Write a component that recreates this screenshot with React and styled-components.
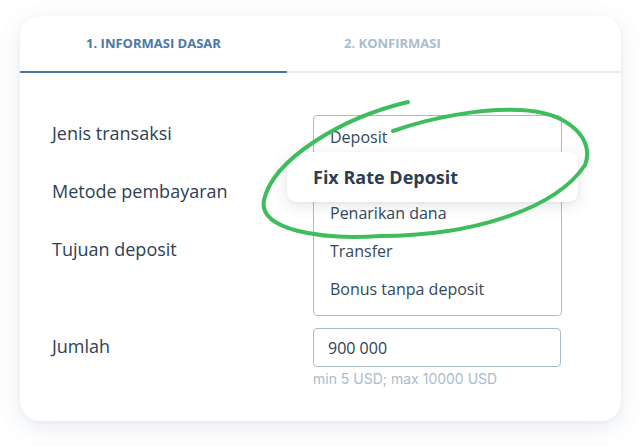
import React from "react";
import styled, { createGlobalStyle } from "styled-components";

const Global = createGlobalStyle`
  html, body { margin: 0; padding: 0; background: #ffffff; }
  body { font-family: "Open Sans", "Noto Sans", sans-serif; }
  * { box-sizing: border-box; }
`;

const Page = styled.div`
  width: 641px;
  height: 446px;
  padding: 16px 20px 0 20px;
`;

const Card = styled.div`
  position: relative;
  width: 601px;
  height: 405px;
  background: #fff;
  border-radius: 20px;
  box-shadow: 0 6px 24px rgba(60, 90, 130, 0.12), 0 1px 4px rgba(60, 90, 130, 0.05);
  overflow: hidden;
`;

const Tabs = styled.div`
  display: flex;
  height: 57px;
  border-bottom: 2px solid #e8ebef;
`;

const Tab = styled.div`
  width: ${(p) => p.$width};
  display: flex;
  align-items: center;
  justify-content: ${(p) => (p.$center ? "center" : "flex-start")};
  padding-left: ${(p) => p.$pad || "0"};
  padding-bottom: 2px;
  font-size: 13px;
  font-weight: 700;
  color: ${(p) => (p.$active ? "#4a78a8" : "#a9bccf")};
  margin-bottom: -2px;
  border-bottom: 2px solid ${(p) => (p.$active ? "#4a78a8" : "transparent")};
`;

const Body = styled.div`
  padding: 42px 0 0 32px;
  display: flex;
  flex-direction: column;
  gap: 12px;
`;

const Row = styled.div`
  display: flex;
  align-items: flex-start;
`;

const LabelColumn = styled.div`
  width: 261px;
  display: flex;
  flex-direction: column;
  gap: 34px;
  padding-top: 6px;
`;

const Label = styled.div`
  width: 261px;
  flex-shrink: 0;
  font-size: 18px;
  line-height: 24px;
  color: #2e4155;
  padding-top: ${(p) => p.$top || "0"};
`;

const List = styled.div`
  width: 249px;
  border: 1px solid #a9bccf;
  border-radius: 4px;
  padding: 2px 0 7px;
  display: flex;
  flex-direction: column;
`;

const Option = styled.div`
  height: 38px;
  line-height: 38px;
  padding-left: 16px;
  font-size: 16px;
  color: #34485c;
`;

const Highlighted = styled.div`
  position: relative;
  z-index: 1;
  height: 50px;
  margin: -4px -17px -8px -27px;
  padding-left: 26px;
  display: flex;
  align-items: center;
  background: #fff;
  border-radius: 9px;
  box-shadow: 0 4px 16px rgba(40, 60, 90, 0.13), 0 1px 3px rgba(40, 60, 90, 0.06);
  font-size: 18px;
  font-weight: 700;
  color: #2c3e50;
`;

const Field = styled.div`
  display: flex;
  flex-direction: column;
  gap: 3px;
`;

const Input = styled.div`
  width: 248px;
  height: 39px;
  border: 1px solid #a9bccf;
  border-radius: 4px;
  padding-left: 14px;
  display: flex;
  align-items: center;
  font-size: 16px;
  color: #2e4155;
`;

const Hint = styled.div`
  font-family: Inter, "Liberation Sans", sans-serif;
  font-size: 14px;
  line-height: 18px;
  color: #a9bccf;
`;

const Scribble = styled.svg`
  position: absolute;
  left: -20px;
  top: -16px;
  width: 641px;
  height: 446px;
  pointer-events: none;
  z-index: 2;
`;

export default function App() {
  return (
    <>
      <Global />
      <Page>
        <Card>
          <Tabs>
            <Tab $width="267px" $center $active>
              1. INFORMASI DASAR
            </Tab>
            <Tab $width="334px" $pad="57px">
              2. KONFIRMASI
            </Tab>
          </Tabs>
          <Body>
            <Row>
              <LabelColumn>
                <Label>Jenis transaksi</Label>
                <Label>Metode pembayaran</Label>
                <Label>Tujuan deposit</Label>
              </LabelColumn>
              <List>
                <Option>Deposit</Option>
                <Highlighted>Fix Rate Deposit</Highlighted>
                <Option>Penarikan dana</Option>
                <Option>Transfer</Option>
                <Option>Bonus tanpa deposit</Option>
              </List>
            </Row>
            <Row>
              <Label $top="6px">Jumlah</Label>
              <Field>
                <Input>900 000</Input>
                <Hint>min 5 USD; max 10000 USD</Hint>
              </Field>
            </Row>
          </Body>
          <Scribble viewBox="0 0 641 446">
            <path
              d="M 408 102 C 340 118, 273 160, 264 200 C 258 230, 320 240, 380 236 C 470 236, 555 210, 585 165 C 595 140, 570 112, 520 110 C 480 108, 430 118, 393 131"
              fill="none"
              stroke="#3dbd5b"
              strokeWidth="4"
              strokeLinecap="round"
              strokeLinejoin="round"
            />
          </Scribble>
        </Card>
      </Page>
    </>
  );
}
